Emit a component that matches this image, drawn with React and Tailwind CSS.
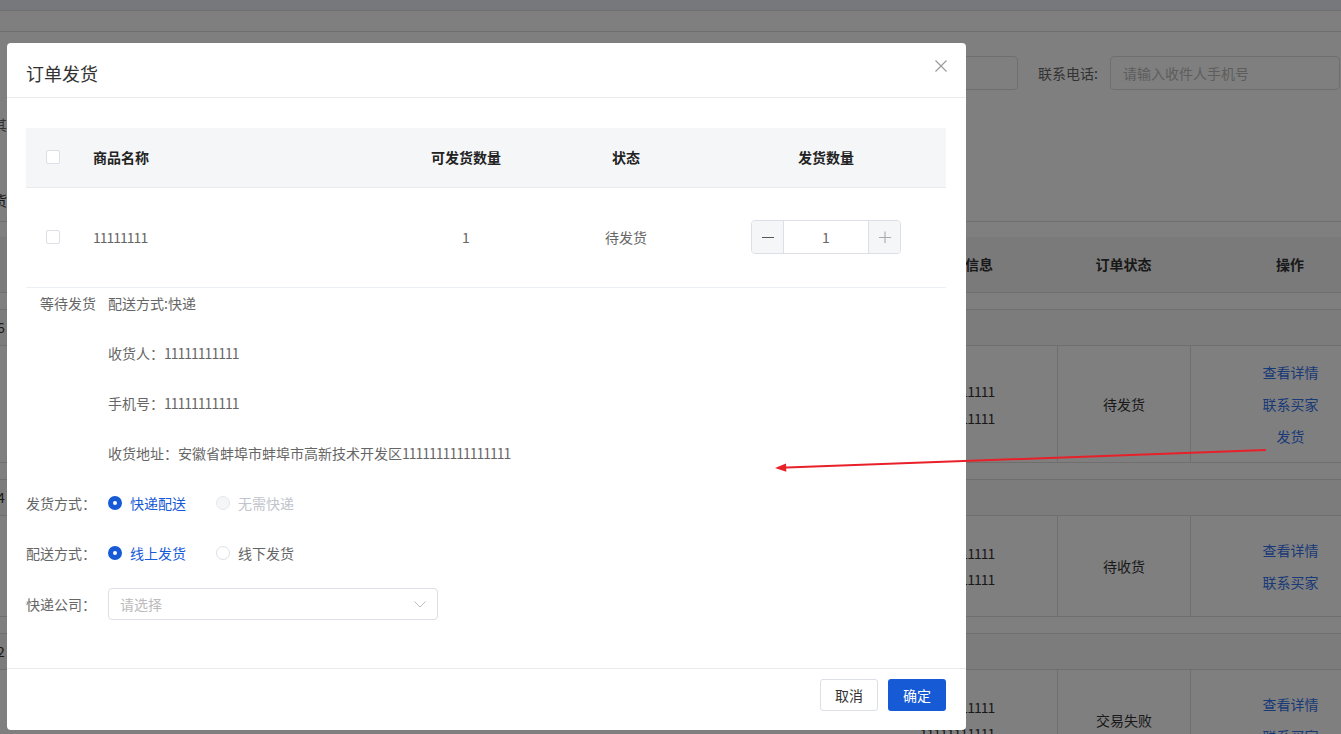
import { useState } from 'react'

function Checkbox() {
  return <span className="block h-[14px] w-[14px] rounded-[2px] border border-[#dcdfe6] bg-white" />
}

function Num({ children }) {
  return <span className="tracking-[-1px]">{children}</span>
}

function Radio({ checked, disabled, label, last }) {
  let dot = 'border border-[#dcdfe6] bg-white'
  let text = 'text-[#666]'
  if (checked) {
    dot = 'border-[5px] border-[#175ad6] bg-white'
    text = 'text-[#175ad6]'
  } else if (disabled) {
    dot = 'border border-[#e4e7ed] bg-[#f5f6f8]'
    text = 'text-[#c0c4cc]'
  }
  return (
    <label className={`flex items-center ${last ? '' : 'mr-[30px]'}`}>
      <span className={`block h-[14px] w-[14px] rounded-full ${dot}`} />
      <span className={`ml-2 ${text}`}>{label}</span>
    </label>
  )
}

function Stepper({ value }) {
  return (
    <div className="flex h-[34px] w-[150px] overflow-hidden rounded-[4px] border border-[#dcdfe6]">
      <button className="flex w-[32px] items-center justify-center border-r border-[#dcdfe6] bg-[#f5f6f8]">
        <svg width="12" height="12" viewBox="0 0 12 12"><path d="M0 6.5h12" stroke="#555" strokeWidth="1.2" /></svg>
      </button>
      <div className="flex flex-1 items-center justify-center bg-white text-[#666]">{value}</div>
      <button className="flex w-[32px] items-center justify-center border-l border-[#dcdfe6] bg-[#f5f6f8]">
        <svg width="12" height="12" viewBox="0 0 12 12"><path d="M0 6.5h12M6 0.5v12" stroke="#aaa" strokeWidth="1.1" /></svg>
      </button>
    </div>
  )
}

// the order list behind the dialog
function BackPage() {
  const rows = [
    { no: '6', h: 'h-[117px]', gap: 'gap-[9px]', status: '待发货', acts: ['查看详情', '联系买家', '发货'], actGap: 'gap-[10px]' },
    { no: '4', h: 'h-[101px]', gap: 'gap-[8px]', status: '待收货', acts: ['查看详情', '联系买家'], actGap: 'gap-[10px]' },
    { no: '2', h: 'h-[101px]', gap: 'gap-[8px]', status: '交易失败', acts: ['查看详情', '联系买家'], actGap: 'gap-[10px]' },
  ]
  return (
    <div className="w-[1390px] text-[14px] text-[#666]">
      <div className="h-[11px] border-b border-[#dedede] bg-[#eef0f6]" />
      <div className="h-[21px] border-b border-[#dedede]" />
      <div className="h-[130px]">
        <div className="flex pl-[788px] pt-[24px]">
          <div className="h-[34px] w-[230px] rounded-[4px] border border-[#dedede]" />
          <span className="ml-[20px] w-[72px] leading-[34px] text-[#666]">联系电话:</span>
          <div className="flex h-[34px] w-[230px] items-center rounded-[4px] border border-[#dedede] pl-[12px] text-[#bbb]">请输入收件人手机号</div>
        </div>
        <span className="ml-[-7px] mt-[24px] block leading-[20px] text-[#666]">其</span>
      </div>
      <div className="h-[60px] border-b border-[#dedede] pt-[28px]">
        <span className="ml-[-7px] block leading-[20px] text-[#333]">货</span>
      </div>
      <div className="h-[15px]" />
      <div className="flex h-[56px] items-center border-b border-[#dedede] bg-[#f4f4f4] font-bold text-[#333]">
        <div className="w-[873px] shrink-0" />
        <div className="w-[184px] shrink-0 text-center">收货信息</div>
        <div className="w-[133px] shrink-0 text-center">订单状态</div>
        <div className="w-[200px] shrink-0 text-center">操作</div>
      </div>
      {rows.map((r, i) => (
        <div key={i}>
          <div className="h-[17px] border-b border-[#dedede]" />
          <div className="flex h-[36px] items-center border-b border-[#dedede] bg-[#f8f8f8] text-[#333]">
            <span className="ml-[-3px]">{r.no}</span>
          </div>
          <div className={`flex ${r.h} border-b border-[#dedede]`}>
            <div className="w-[873px] shrink-0" />
            <div className={`flex w-[184px] shrink-0 flex-col items-center justify-center ${r.gap} pr-[16px] text-[#333]`}>
              <span className="leading-[18px] tracking-[-1px]">11111111111</span>
              <span className="leading-[18px] tracking-[-1px]">11111111111</span>
            </div>
            <div className="flex w-[133px] shrink-0 items-center justify-center border-l border-[#dedede] text-[#333]">{r.status}</div>
            <div className={`flex w-[200px] shrink-0 flex-col items-center justify-center ${r.actGap} border-l border-[#dedede] text-[#3474ee]`}>
              {r.acts.map(a => <span key={a} className="leading-[22px]">{a}</span>)}
            </div>
          </div>
        </div>
      ))}
    </div>
  )
}

export default function App() {
  const [shipType, setShipType] = useState('express')
  const [mode, setMode] = useState('online')

  return (
    <div className="relative h-[734px] w-[1341px] overflow-hidden bg-white font-['Noto_Sans_CJK_SC','Liberation_Sans',sans-serif] text-[14px]">
      <BackPage />
      <div className="absolute inset-0 bg-black/50" />

      {/* dialog */}
      <div className="absolute left-[7px] top-[43px] flex h-[687px] w-[959px] flex-col rounded-[4px] bg-white">
        <div className="relative h-[55px] shrink-0 border-b border-[#e8eaec] px-[19px] pt-[18px]">
          <h2 className="text-[18px] leading-[24px] text-[#333]">订单发货</h2>
          <button className="absolute right-[18px] top-[16px] p-[1px]">
            <svg width="12" height="12" viewBox="0 0 12 12"><path d="M0.5 0.5l11 11M11.5 0.5l-11 11" stroke="#999" strokeWidth="1.1" /></svg>
          </button>
        </div>

        <div className="h-[570px] shrink-0 pl-[19px] pr-[20px] pt-[30px] text-[#666]">
          <div className="flex h-[60px] items-center border-b border-[#e8eaee] bg-[#f5f6f8] pb-[1px] font-bold text-[#222]">
            <div className="w-[47px] shrink-0 pl-[20px]"><Checkbox /></div>
            <div className="w-[313px] shrink-0 pl-[20px]">商品名称</div>
            <div className="w-[160px] shrink-0 text-center">可发货数量</div>
            <div className="w-[160px] shrink-0 text-center">状态</div>
            <div className="flex-1 text-center">发货数量</div>
          </div>
          <div className="flex h-[100px] items-center border-b border-[#ebeef5] pb-[1px]">
            <div className="w-[47px] shrink-0 pl-[20px]"><Checkbox /></div>
            <div className="w-[313px] shrink-0 pl-[20px]"><Num>11111111</Num></div>
            <div className="w-[160px] shrink-0 text-center">1</div>
            <div className="w-[160px] shrink-0 text-center">待发货</div>
            <div className="flex flex-1 justify-center"><Stepper value={1} /></div>
          </div>

          <div className="-mt-[1px] flex flex-col gap-[18px] leading-[32px]">
            <div className="flex h-[32px]">
              <span className="w-[82px] shrink-0 pl-[14px]">等待发货</span>
              <span>配送方式:快递</span>
            </div>
            <div className="h-[32px] pl-[82px]">收货人：<Num>11111111111</Num></div>
            <div className="h-[32px] pl-[82px]">手机号：<Num>11111111111</Num></div>
            <div className="h-[32px] pl-[82px]">收货地址：安徽省蚌埠市蚌埠市高新技术开发区<Num>1111111111111111</Num></div>

            <div className="flex h-[32px] items-center">
              <span className="w-[82px] shrink-0">发货方式：</span>
              <div className="flex" onClick={() => setShipType('express')}>
                <Radio checked={shipType === 'express'} label="快递配送" />
                <Radio disabled label="无需快递" last />
              </div>
            </div>
            <div className="flex h-[32px] items-center">
              <span className="w-[82px] shrink-0">配送方式：</span>
              <div className="flex">
                <span onClick={() => setMode('online')}><Radio checked={mode === 'online'} label="线上发货" /></span>
                <span onClick={() => setMode('offline')}><Radio checked={mode === 'offline'} label="线下发货" last /></span>
              </div>
            </div>
            <div className="mt-[1px] flex h-[32px] items-center">
              <span className="w-[82px] shrink-0">快递公司：</span>
              <div className="flex h-[32px] w-[330px] items-center justify-between rounded-[4px] border border-[#dcdfe6] pl-[11px] pr-[11px] text-[#bbb]">
                <span>请选择</span>
                <svg width="12" height="7" viewBox="0 0 12 7"><path d="M0.5 0.5l5.5 5.5 5.5-5.5" fill="none" stroke="#bbb" strokeWidth="1" /></svg>
              </div>
            </div>
          </div>
        </div>

        <div className="flex flex-1 justify-end gap-[10px] border-t border-[#e8eaec] pr-[20px] pt-[10px]">
          <button className="h-[32px] w-[58px] rounded-[3px] border border-[#dcdfe6] bg-white text-[#333]">取消</button>
          <button className="h-[32px] w-[58px] rounded-[3px] bg-[#175ad6] text-white">确定</button>
        </div>
      </div>

      {/* red annotation arrow */}
      <svg className="pointer-events-none absolute inset-0" width="1341" height="734" viewBox="0 0 1341 734">
        <path d="M1266 450L780 467.8" stroke="#e8202a" strokeWidth="2" fill="none" />
        <path d="M775 468l11-4.4 0.3 8.2z" fill="#e8202a" />
      </svg>
    </div>
  )
}
